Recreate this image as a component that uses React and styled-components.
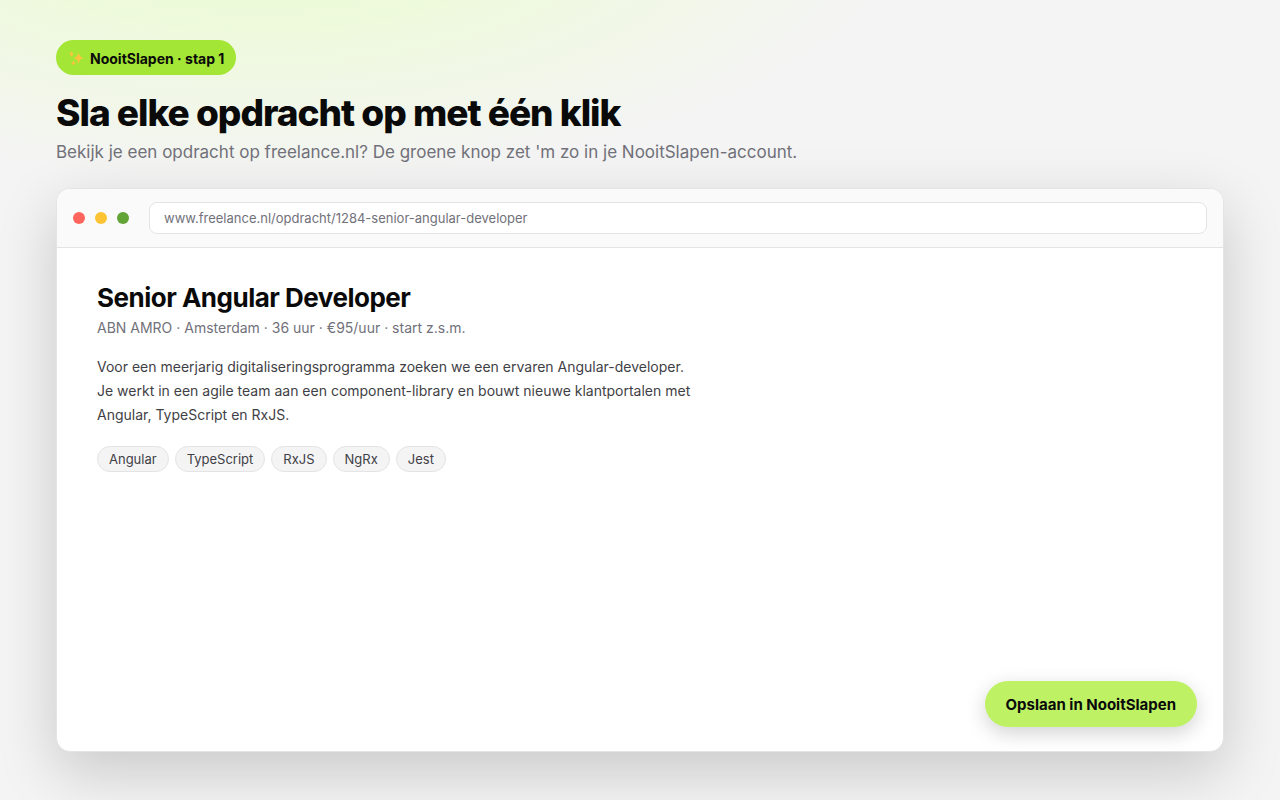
import styled, { createGlobalStyle } from "styled-components";

const GlobalStyle = createGlobalStyle`
  * {
    box-sizing: border-box;
  }
  body {
    margin: 0;
    font-family: Inter, "Liberation Sans", sans-serif;
    color: #0a0a0a;
    background: #f4f4f4;
  }
  h1, h2, p, ul {
    margin: 0;
    padding: 0;
  }
`;
const Page = styled.main`
  display: flex;
  flex-direction: column;
  min-height: 100vh;
  padding: 40px 56px 48px;
  background: radial-gradient(
      1000px 400px at 20% -10%,
      #e9fbd0 0%,
      #eefadb 25%,
      rgba(244, 244, 244, 0) 65%
    ),
    #f4f4f4;
`;
const StepBadge = styled.div`
  display: inline-flex;
  align-items: center;
  align-self: flex-start;
  gap: 6px;
  height: 35px;
  padding: 2px 12px 0;
  border-radius: 999px;
  background: #a3e635;
  font-size: 14px;
  font-weight: 700;
`;
const Title = styled.h1`
  margin-top: 15px;
  font-size: 37px;
  line-height: 46px;
  font-weight: 800;
  letter-spacing: -1px;
`;
const Subtitle = styled.p`
  margin-top: 3px;
  font-size: 17px;
  line-height: 26px;
  color: #71717a;
`;
const BrowserWindow = styled.section`
  display: flex;
  flex: 1;
  flex-direction: column;
  margin-top: 23px;
  border: 1px solid #e4e4e7;
  border-radius: 14px;
  background: white;
  overflow: hidden;
  box-shadow: 0 20px 60px rgba(0, 0, 0, 0.18);
`;
const Toolbar = styled.div`
  display: flex;
  align-items: center;
  gap: 10px;
  padding: 13px 16px;
  border-bottom: 1px solid #e4e4e7;
  background: #fafafa;
`;
const Dot = styled.span`
  width: 12px;
  height: 12px;
  border-radius: 50%;
  background: ${(props) => props.$color};
`;
const AddressBar = styled.input`
  flex: 1;
  min-width: 0;
  height: 32px;
  margin-left: 10px;
  padding: 0 14px;
  border: 1px solid #e4e4e7;
  border-radius: 8px;
  background: white;
  color: #71717a;
  font: 13px Inter, sans-serif;
  outline: none;
`;
const Content = styled.div`
  display: flex;
  flex: 1;
  flex-direction: column;
  padding: 34px 26px 24px 40px;
`;
const JobTitle = styled.h2`
  font-size: 26px;
  line-height: 32px;
  font-weight: 700;
  letter-spacing: -0.5px;
`;
const Meta = styled.p`
  margin-top: 4px;
  font-size: 14px;
  line-height: 20px;
  color: #71717a;
`;
const Description = styled.p`
  max-width: 600px;
  margin-top: 17px;
  font-size: 14px;
  line-height: 24px;
  color: #3f3f46;
`;
const Tags = styled.ul`
  display: flex;
  flex-wrap: wrap;
  gap: 6px;
  margin-top: 19px;
  list-style: none;
`;
const Tag = styled.li`
  height: 26px;
  padding: 0 11px;
  border: 1px solid #e4e4e7;
  border-radius: 999px;
  background: #f4f4f5;
  color: #3f3f46;
  font-size: 13px;
  line-height: 25px;
`;
const SaveButton = styled.button`
  align-self: flex-end;
  height: 46px;
  margin-top: auto;
  padding: 0 21px;
  border: none;
  border-radius: 999px;
  background: #bef264;
  color: #0a0a0a;
  font: 700 15px Inter, sans-serif;
  box-shadow: 0 6px 20px rgba(0, 0, 0, 0.18);
  cursor: pointer;
`;

const Sparkles = () => (
  <svg width="16" height="16" viewBox="0 0 16 16" fill="#ffc43d" aria-hidden="true">
    <path d="M10.500 1Q11.200 6.300 15.500 7Q11.200 7.700 10.500 13Q9.800 7.700 5.500 7Q9.800 6.300 10.500 1z" />
    <path d="M3.500 0Q4 2.500 6 3Q4 3.500 3.500 6Q3 3.500 1 3Q3 2.500 3.500 0z" />
    <path d="M5.500 9.500Q6 11.500 8 12Q6 12.500 5.500 14.500Q5 12.500 3 12Q5 11.500 5.500 9.500z" />
  </svg>
);

const DOTS = ["#ff655c", "#fcc435", "#63a437"];
const SKILLS = ["Angular", "TypeScript", "RxJS", "NgRx", "Jest"];

const App = () => (
  <>
    <GlobalStyle />
    <Page>
      <StepBadge>
        <Sparkles />
        NooitSlapen · stap 1
      </StepBadge>
      <Title>Sla elke opdracht op met één klik</Title>
      <Subtitle>
        Bekijk je een opdracht op freelance.nl? De groene knop zet 'm zo in je
        NooitSlapen-account.
      </Subtitle>
      <BrowserWindow>
        <Toolbar>
          {DOTS.map((color) => (
            <Dot key={color} $color={color} />
          ))}
          <AddressBar
            aria-label="Adres"
            readOnly
            value="www.freelance.nl/opdracht/1284-senior-angular-developer"
          />
        </Toolbar>
        <Content>
          <JobTitle>Senior Angular Developer</JobTitle>
          <Meta>ABN AMRO · Amsterdam · 36 uur · €95/uur · start z.s.m.</Meta>
          <Description>
            Voor een meerjarig digitaliseringsprogramma zoeken we een ervaren
            Angular-developer. Je werkt in een agile team aan een
            component-library en bouwt nieuwe klantportalen met Angular,
            TypeScript en RxJS.
          </Description>
          <Tags>
            {SKILLS.map((skill) => (
              <Tag key={skill}>{skill}</Tag>
            ))}
          </Tags>
          <SaveButton type="button">Opslaan in NooitSlapen</SaveButton>
        </Content>
      </BrowserWindow>
    </Page>
  </>
);

export default App;
